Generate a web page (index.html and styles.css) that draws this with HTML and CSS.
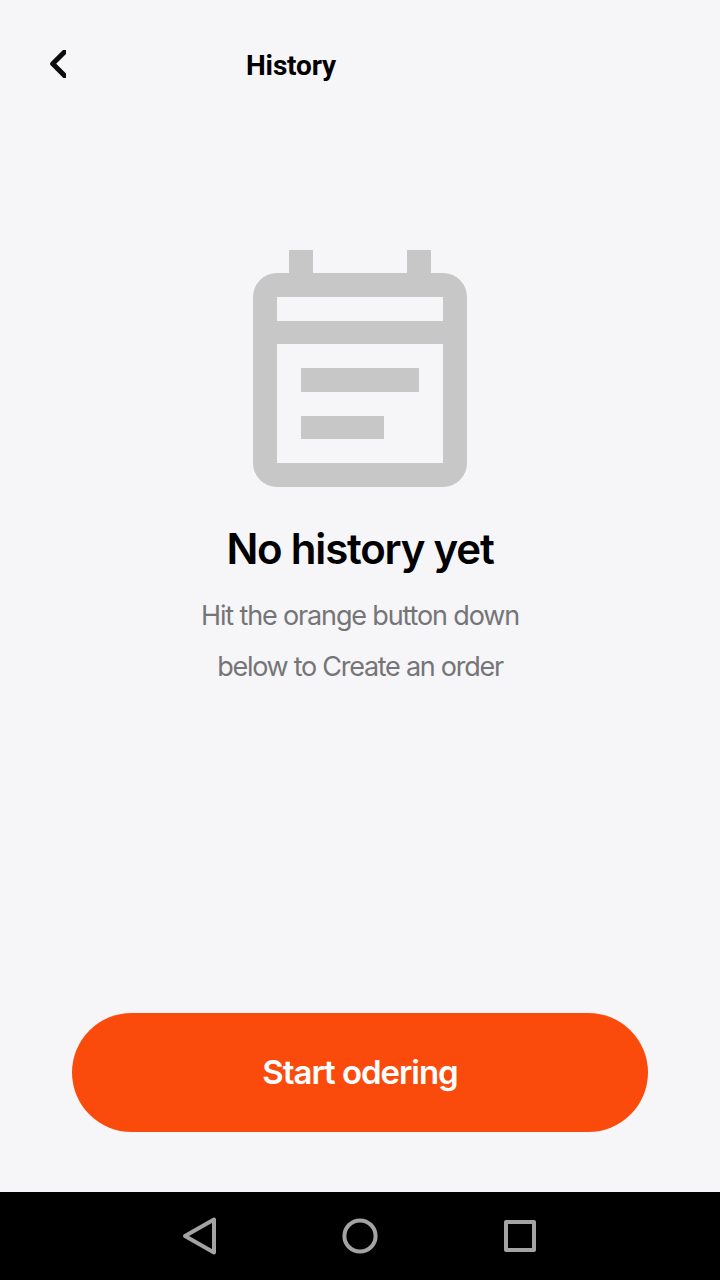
FILE: index.html
```html
<!DOCTYPE html>
<html lang="en">
<head>
<meta charset="utf-8">
<title>History</title>
<link rel="stylesheet" href="styles.css">
</head>
<body>
<div class="app">
  <header class="header">
    <svg class="back" viewBox="0 0 16 28" role="img" aria-label="Back"><path d="M18-1.5 2.7 13.8 18 29.1"/></svg>
    <h1 class="title">History</h1>
  </header>
  <main class="empty">
    <svg class="calendar" viewBox="0 0 216 240"><path fill-rule="evenodd" d="M37 2h24v23h94V2h24v23h12a24 24 0 0 1 24 24v166a24 24 0 0 1-24 24H25a24 24 0 0 1-24-24V49a24 24 0 0 1 24-24h12zM25 49v24h166V49zM25 96v119h166V96zM49 120h118v24H49zM49 168h83v23H49z"/></svg>
    <h2 class="heading">No history yet</h2>
    <p class="hint"><span class="line">Hit the orange button down</span><span class="line line-tight">below to Create an order</span></p>
  </main>
  <button class="start">Start odering</button>
  <nav class="navbar">
    <svg class="nav-icon" viewBox="0 0 40 40"><path d="M34 3.5v33L5 20z"/></svg>
    <svg class="nav-icon" viewBox="0 0 40 40"><circle cx="20" cy="20" r="15.6"/></svg>
    <svg class="nav-icon" viewBox="0 0 40 40"><rect x="6" y="6" width="28" height="28"/></svg>
  </nav>
</div>
</body>
</html>
```
FILE: styles.css
```css
* { box-sizing: border-box; }
body { margin: 0; background: #f6f6f9; font-family: Inter, sans-serif; }
.app { display: flex; flex-direction: column; width: 720px; height: 1280px; }
.header { display: flex; height: 130px; padding: 50px 0 0 50px; }
.back { width: 16px; height: 28px; overflow: hidden; fill: none; stroke: #0c0c0c; stroke-width: 5; stroke-linejoin: round; }
.title { margin: 0 0 0 180px; font: 700 28px/32px Roboto, sans-serif; letter-spacing: -.15px; white-space: nowrap; }
.empty { display: flex; flex: 1; flex-direction: column; align-items: center; padding-top: 118px; }
.calendar { width: 216px; height: 240px; fill: #c7c7c7; }
.heading { margin: 33px 0 0; font-size: 42px; line-height: 56px; font-weight: 600; letter-spacing: -1.2px; white-space: nowrap; }
.hint { margin: 13px 0 0; color: #757577; font-size: 27px; line-height: 51px; text-align: center; letter-spacing: -1.15px; }
.line { display: block; white-space: nowrap; }
.line-tight { letter-spacing: -1.27px; }
.start { width: 576px; height: 119px; margin: 0 auto 60px; padding: 0 0 2px; border: 0; border-radius: 60px; background: #fb4b0c; color: #fff; font: 600 33px/40px Inter, sans-serif; letter-spacing: -1.05px; }
.navbar { display: flex; align-items: center; justify-content: center; gap: 120px; height: 88px; background: #000; }
.nav-icon { width: 40px; height: 40px; fill: none; stroke: #a3a3a3; stroke-width: 4; stroke-linejoin: round; }
```
